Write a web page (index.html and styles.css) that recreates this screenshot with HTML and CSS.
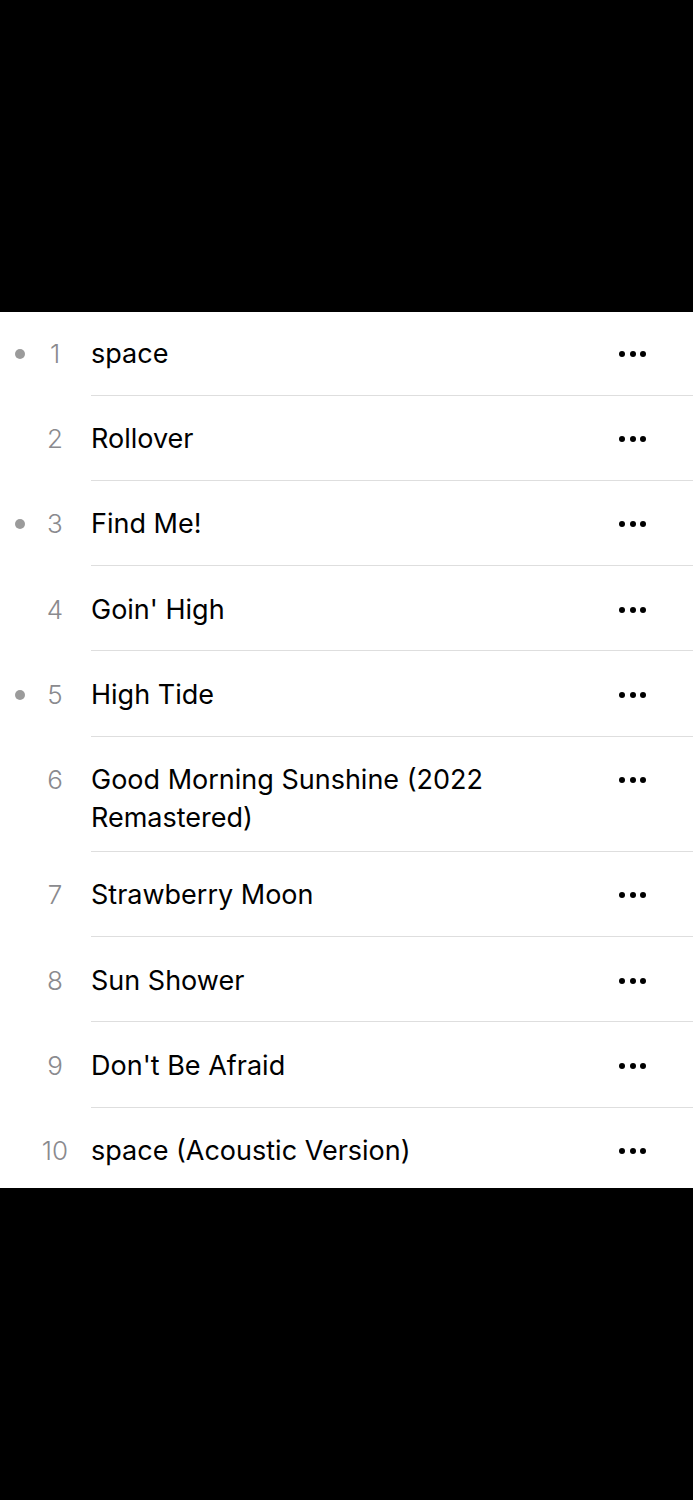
FILE: index.html
```html
<!DOCTYPE html>
<html lang="en">
<head>
    <meta charset="UTF-8">
    <meta name="viewport" content="width=device-width, initial-scale=1.0">
    <title>Tracks</title>
    <link rel="stylesheet" href="styles.css">
</head>
<body>
    <div class="top-black"></div>

    <ul class="track-list">
        <li class="track first">
            <span class="mark"><span class="dot"></span></span>
            <span class="num">1</span>
            <div class="info">
                <span class="title">space</span>
                <span class="more"><i></i><i></i><i></i></span>
            </div>
        </li>
        <li class="track">
            <span class="mark"></span>
            <span class="num">2</span>
            <div class="info">
                <span class="title">Rollover</span>
                <span class="more"><i></i><i></i><i></i></span>
            </div>
        </li>
        <li class="track">
            <span class="mark"><span class="dot"></span></span>
            <span class="num">3</span>
            <div class="info">
                <span class="title">Find Me!</span>
                <span class="more"><i></i><i></i><i></i></span>
            </div>
        </li>
        <li class="track">
            <span class="mark"></span>
            <span class="num">4</span>
            <div class="info">
                <span class="title">Goin' High</span>
                <span class="more"><i></i><i></i><i></i></span>
            </div>
        </li>
        <li class="track">
            <span class="mark"><span class="dot"></span></span>
            <span class="num">5</span>
            <div class="info">
                <span class="title">High Tide</span>
                <span class="more"><i></i><i></i><i></i></span>
            </div>
        </li>
        <li class="track">
            <span class="mark"></span>
            <span class="num">6</span>
            <div class="info">
                <span class="title">Good Morning Sunshine (2022 Remastered)</span>
                <span class="more"><i></i><i></i><i></i></span>
            </div>
        </li>
        <li class="track">
            <span class="mark"></span>
            <span class="num">7</span>
            <div class="info">
                <span class="title">Strawberry Moon</span>
                <span class="more"><i></i><i></i><i></i></span>
            </div>
        </li>
        <li class="track">
            <span class="mark"></span>
            <span class="num">8</span>
            <div class="info">
                <span class="title">Sun Shower</span>
                <span class="more"><i></i><i></i><i></i></span>
            </div>
        </li>
        <li class="track">
            <span class="mark"></span>
            <span class="num">9</span>
            <div class="info">
                <span class="title">Don't Be Afraid</span>
                <span class="more"><i></i><i></i><i></i></span>
            </div>
        </li>
        <li class="track last">
            <span class="mark"></span>
            <span class="num">10</span>
            <div class="info">
                <span class="title">space (Acoustic Version)</span>
                <span class="more"><i></i><i></i><i></i></span>
            </div>
        </li>
    </ul>
</body>
</html>
```

FILE: styles.css
```css
body {
    margin: 0;
    padding: 0;
    background-color: #000;
    font-family: Inter, "Noto Sans", sans-serif;
    height: 1500px;
    overflow: hidden;
}

.top-black {
    height: 312px;
    background-color: #000;
}

.track-list {
    list-style: none;
    margin: 0;
    padding: 0;
    background-color: #fff;
}

.track {
    display: flex;
    align-items: flex-start;
    --pad-top: 24.5px;
}

.track.first {
    --pad-top: 23px;
}

.mark {
    width: 40px;
    height: 38px;
    margin-top: var(--pad-top);
    display: flex;
    align-items: center;
    justify-content: center;
}

.dot {
    width: 10px;
    height: 10px;
    border-radius: 50%;
    background-color: #9b9b9b;
}

.num {
    width: 30px;
    margin-top: var(--pad-top);
    text-align: center;
    font-size: 26px;
    font-weight: 300;
    line-height: 38px;
    color: #8a8a8e;
}

.info {
    flex: 1;
    margin-left: 21px;
    display: flex;
    align-items: flex-start;
    min-height: 85.33px;
    padding: var(--pad-top) 0 13.5px;
    box-sizing: border-box;
    border-bottom: 1px solid #dedede;
}

.track.first .info {
    min-height: 83.5px;
}

.track.last .info {
    border-bottom: none;
    min-height: 80px;
}

.title {
    flex: 1;
    font-size: 27px;
    line-height: 38px;
    color: #000;
    padding-right: 100px;
}

.more {
    display: flex;
    align-items: center;
    gap: 4.5px;
    height: 38px;
    margin-right: 47px;
}

.more i {
    width: 6px;
    height: 6px;
    border-radius: 50%;
    background-color: #000;
}
```
